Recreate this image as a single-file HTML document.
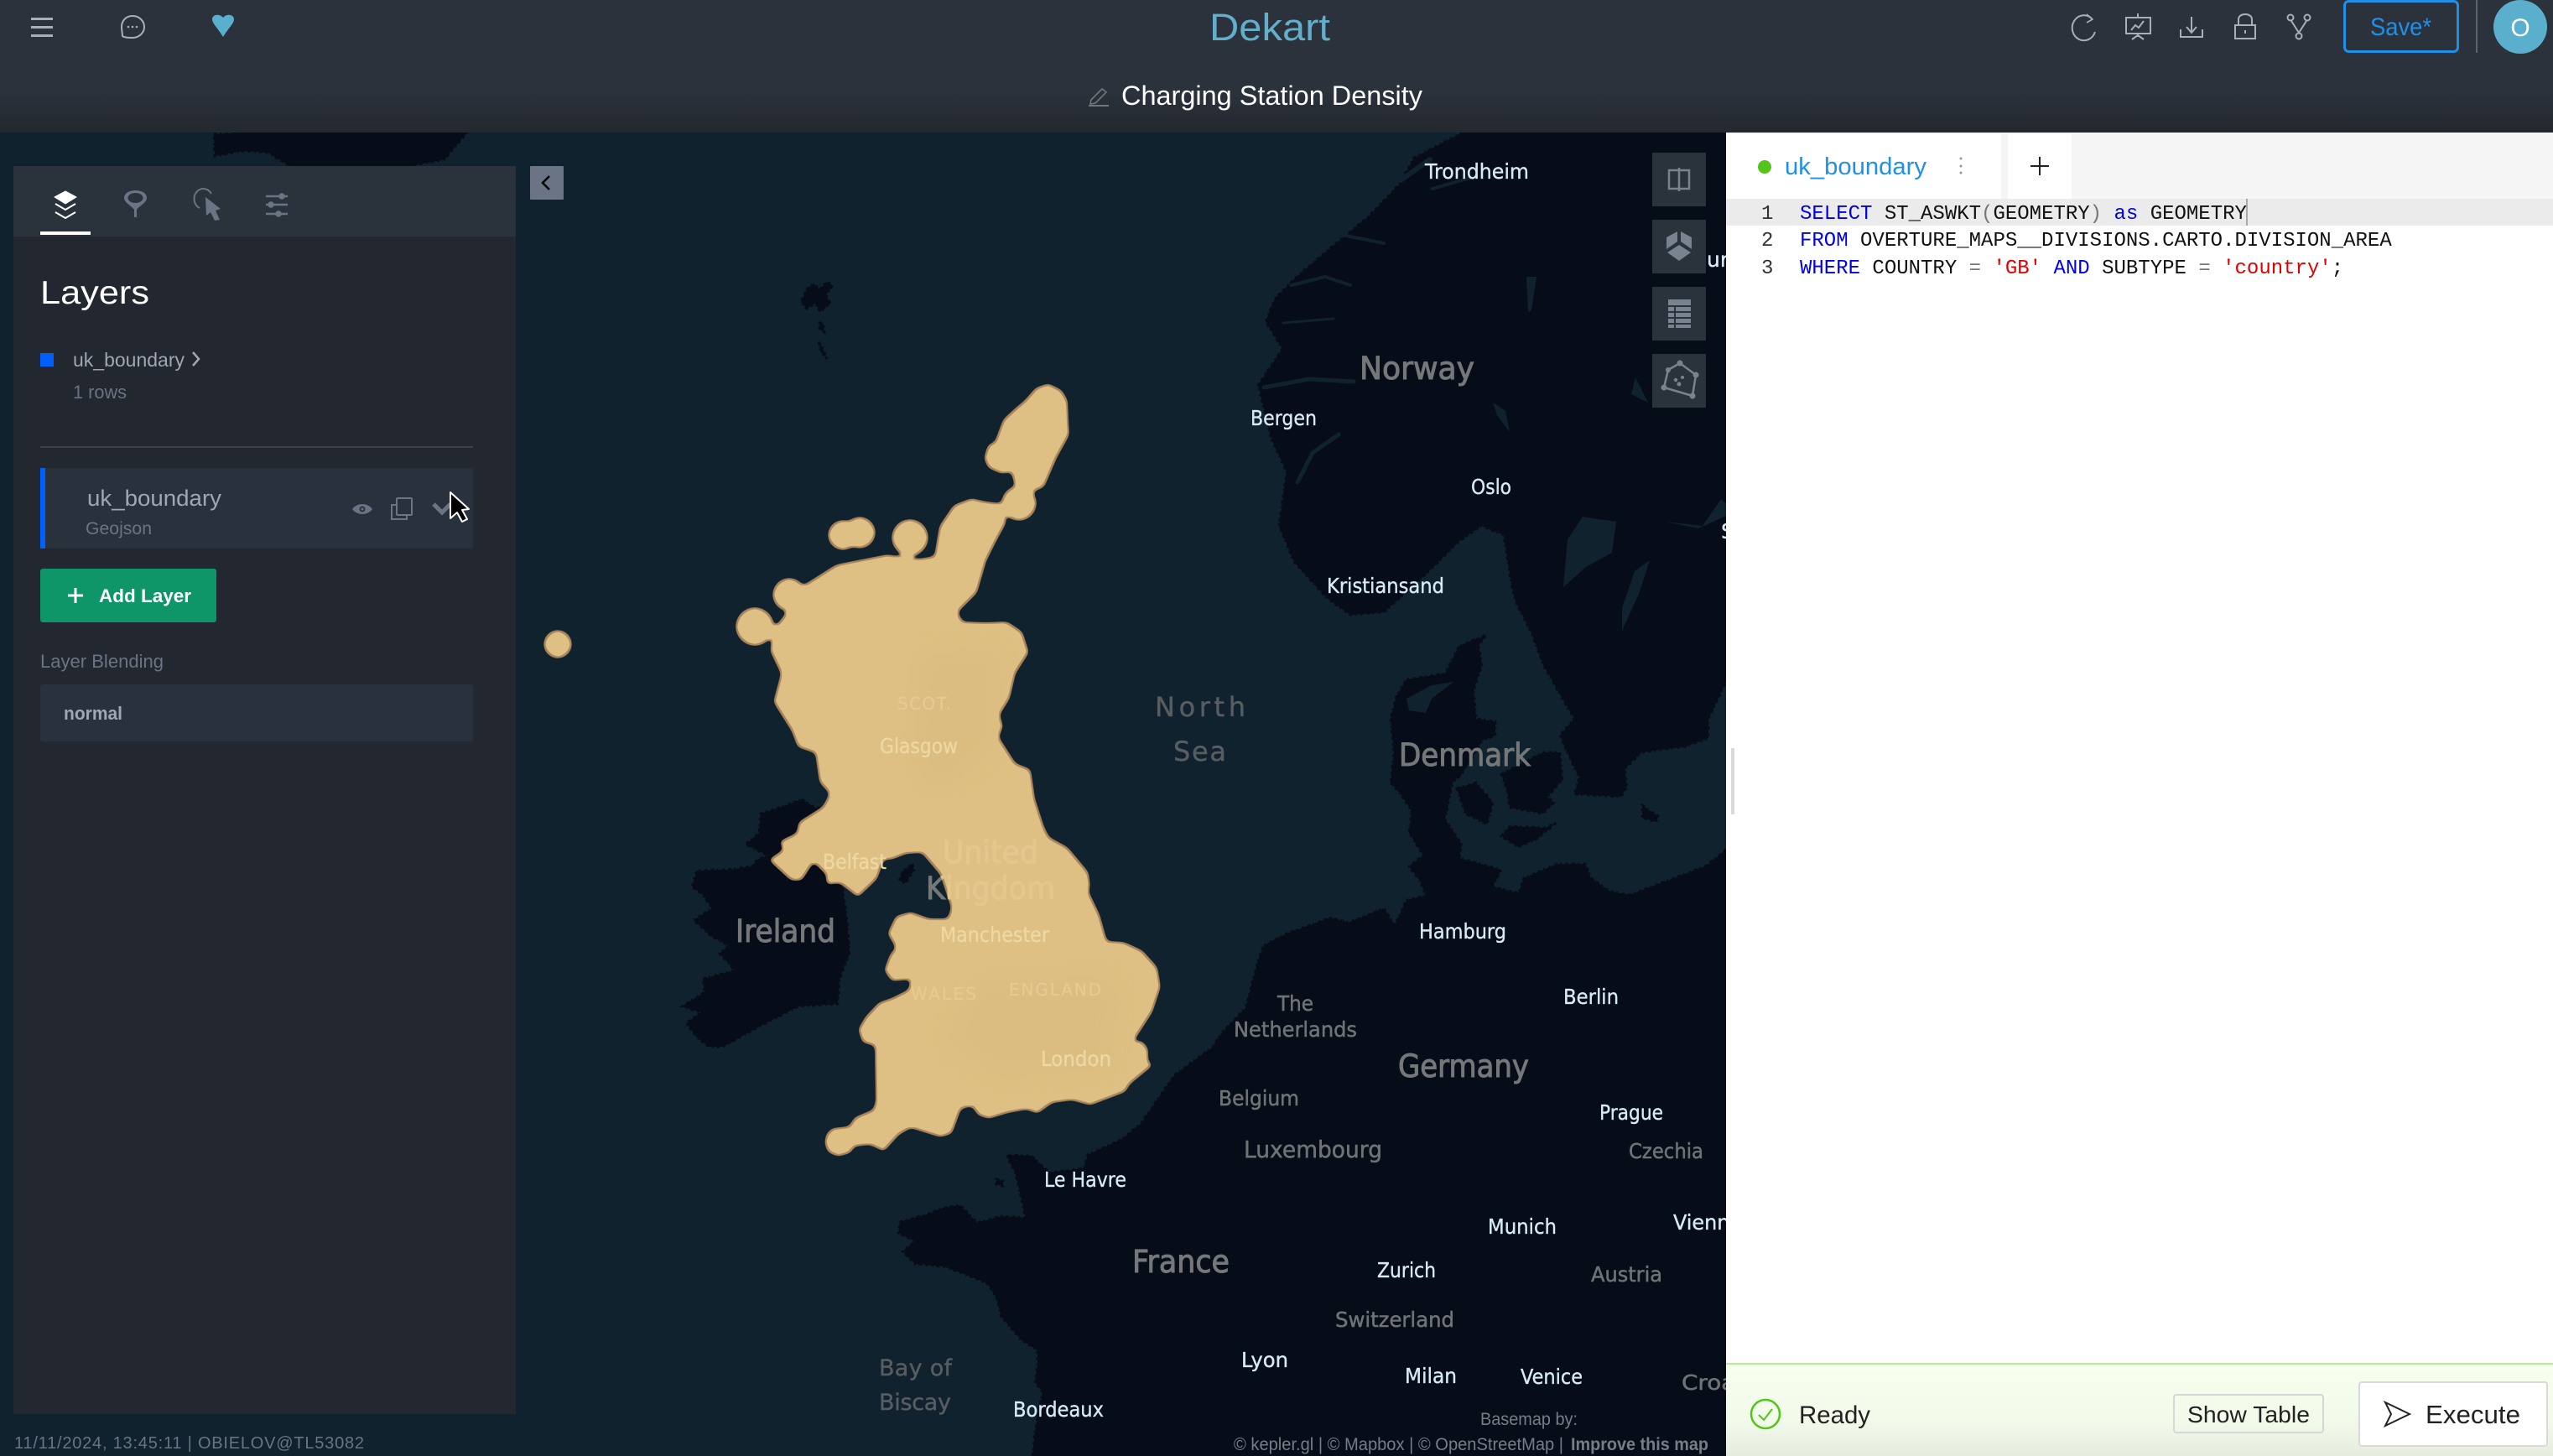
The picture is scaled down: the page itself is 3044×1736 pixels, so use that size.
<!DOCTYPE html>
<html lang="en">
<head>
<meta charset="utf-8">
<title>Dekart - Charging Station Density</title>
<style>
html,body{margin:0;padding:0;background:#10222e;width:3044px;height:1736px;overflow:hidden}
svg{display:block;position:absolute;left:0;top:0}
text{font-family:"Liberation Sans",sans-serif;white-space:pre}
.c{font-family:"DejaVu Sans","Liberation Sans",sans-serif;font-size:25px;fill:#d8ebf4;stroke:#d8ebf4;stroke-width:.35}
.k{font-family:"DejaVu Sans","Liberation Sans",sans-serif;font-size:25px;fill:#707375;stroke:#707375;stroke-width:.5}
.b{font-family:"DejaVu Sans","Liberation Sans",sans-serif;font-size:37px;fill:#757779;stroke:#757779;stroke-width:1}
.s{font-family:"DejaVu Sans","Liberation Sans",sans-serif;font-size:32px;fill:#575d61;stroke:#575d61;stroke-width:.4}
.u{font-family:"DejaVu Sans","Liberation Sans",sans-serif;font-size:25px;fill:#edd8a3;stroke:#edd8a3;stroke-width:.3}
.v{font-family:"DejaVu Sans","Liberation Sans",sans-serif;fill:#e5ca91;stroke:#e5ca91;stroke-width:.3}
.m{font-family:"Liberation Mono",monospace;font-size:24px;fill:#111}
.kw{fill:#0000e6}.st{fill:#e00000}.op{fill:#777}
</style>
</head>
<body>
<svg width="3044" height="1736" viewBox="0 0 3044 1736" xmlns="http://www.w3.org/2000/svg">
<defs>
<linearGradient id="hg" x1="0" y1="0" x2="0" y2="1">
<stop offset="0" stop-color="#2b323c"/><stop offset=".68" stop-color="#2b323c"/><stop offset="1" stop-color="#24282f"/>
</linearGradient>
<linearGradient id="fg" x1="0" y1="0" x2="0" y2="1">
<stop offset="0" stop-color="#f6ffed"/><stop offset=".6" stop-color="#f2faea"/><stop offset="1" stop-color="#e6eddf"/>
</linearGradient>
<clipPath id="mapclip"><rect x="0" y="158" width="2058" height="1578"/></clipPath>
<clipPath id="ukc"><use href="#ukp"/></clipPath>
<filter id="sm" filterUnits="userSpaceOnUse" x="600" y="420" width="850" height="1000" color-interpolation-filters="sRGB">
<feGaussianBlur in="SourceAlpha" stdDeviation="3.5" result="b"/>
<feComponentTransfer in="b" result="s"><feFuncA type="linear" slope="10" intercept="-4.5"/></feComponentTransfer>
<feMorphology in="s" operator="erode" radius="2.2" result="e"/>
<feFlood flood-color="#a8845c" result="o"/>
<feComposite in="o" in2="s" operator="in" result="oo"/>
<feFlood flood-color="#dfc084" result="f"/>
<feComposite in="f" in2="e" operator="in" result="ff"/>
<feMerge><feMergeNode in="oo"/><feMergeNode in="ff"/></feMerge>
</filter>
<filter id="bl" x="-20%" y="-20%" width="140%" height="140%"><feGaussianBlur stdDeviation="14"/></filter>
</defs>

<!-- MAP -->
<g clip-path="url(#mapclip)">
<rect x="0" y="158" width="2058" height="1578" fill="#10222e"/>
<g fill="#060d18" stroke="#060d18" stroke-width="3" stroke-dasharray="4 3 2 5 3 4">
<!-- Iceland tip -->
<polygon points="255,160 290,158 557,158 530,190 490,198 345,198 320,182 290,180 256,186"/>
<!-- Faroe -->
<polygon points="962,345 970,338 978,345 985,336 993,340 985,352 990,362 978,372 972,362 962,368 955,360"/>
<polygon points="977,384 982,387 983,396 977,392"/>
<polygon points="976,408 981,415 986,428 979,420"/>
<!-- Ireland -->
<polygon points="956,953 972,963 979,963 982,1000 1005,1060 1010,1097 1013,1137 1001,1167 999,1197 952,1200 907,1223 862,1248 845,1248 831,1237 818,1220 836,1207 813,1200 840,1183 838,1167 876,1157 858,1137 869,1127 849,1117 827,1097 849,1083 838,1067 825,1057 831,1038 867,1037 896,1033 903,1025 916,1020 889,1007 905,993 907,970 938,960"/>
<polygon points="1088,1030 1090,1038 1079,1053 1072,1050 1077,1038"/>
<!-- Continent -->
<polygon points="1231,1736 1234,1707 1243,1660 1234,1647 1237,1630 1237,1610 1217,1597 1194,1570 1188,1547 1177,1530 1160,1523 1125,1510 1091,1507 1076,1492 1091,1480 1071,1470 1073,1457 1108,1447 1125,1440 1145,1437 1165,1458 1194,1450 1223,1452 1217,1427 1211,1400 1200,1377 1230,1378 1251,1398 1292,1393 1297,1377 1338,1358 1360,1340 1400,1282 1445,1249 1458,1230 1485,1202 1500,1145 1507,1127 1534,1113 1587,1094 1608,1100 1650,1083 1663,1103 1677,1073 1700,1068 1693,1050 1680,1033 1697,1020 1680,993 1683,967 1670,947 1658,933 1662,897 1658,857 1665,830 1677,810 1723,803 1740,770 1772,757 1763,770 1767,793 1757,823 1760,857 1783,860 1783,877 1767,883 1743,923 1732,933 1723,977 1743,1007 1740,1023 1790,1037 1780,1057 1810,1065 1817,1047 1857,1030 1890,1030 1897,1047 1920,1063 1943,1067 2033,1033 2058,1013 2058,1736"/>
<!-- Danish islands -->
<polygon points="1737,940 1760,933 1780,957 1773,983 1747,970"/>
<polygon points="1790,923 1840,897 1860,897 1863,930 1845,950 1853,957 1840,970 1800,963 1797,943"/>
<polygon points="1790,997 1800,985 1843,987 1857,980 1833,1000 1810,1010"/>
<polygon points="1958,960 1977,973 1975,980 1958,975"/>
<!-- Norway + Sweden -->
<polygon points="1744,158 1686,188 1668,220 1632,258 1605,280 1547,329 1520,356 1509,383 1529,416 1500,459 1516,524 1534,562 1525,627 1543,670 1583,714 1610,733 1650,730 1704,681 1739,646 1766,627 1793,638 1802,697 1807,717 1827,757 1840,793 1863,833 1877,857 1860,877 1870,900 1883,927 1877,947 1933,950 1940,937 1937,917 1957,897 2010,890 2037,880 2037,857 2058,813 2058,158"/>
<!-- France small isles -->
<polygon points="1188,1406 1196,1408 1196,1414 1188,1412"/>
</g>
<!-- lakes and fjords -->
<g fill="#10222e">
<polygon points="1887,616 1927,622 1922,659 1891,676 1864,700 1869,643"/>
<polygon points="1967,668 1954,708 1934,752 1934,725 1949,681"/>
<polygon points="1985,622 2030,627 2052,595 2058,600 2058,615 2025,630"/>
<polygon points="1677,833 1707,817 1733,813 1707,833 1700,850 1680,847"/>
<polygon points="1820,330 1832,330 1826,370 1822,372"/>
<polygon points="1780,480 1795,490 1800,515 1785,495"/>
<polygon points="1950,450 1960,470 1965,480 1945,470"/>
</g>
<g fill="none" stroke="#10222e" stroke-linecap="round">
<path d="M1507 462 L1560 452 L1614 455" stroke-width="5"/>
<path d="M1547 575 L1565 540 L1596 518" stroke-width="5"/>
<path d="M1540 340 L1580 330 L1610 340" stroke-width="4"/>
<path d="M1530 385 L1590 380" stroke-width="3"/>
<path d="M1600 280 L1650 290" stroke-width="4"/>
<path d="M1670 215 L1705 190" stroke-width="6"/>
<path d="M1708 225 L1760 210" stroke-width="4"/>
</g>

<!-- labels beneath the layer -->
<text class="b" x="877" y="1123" textLength="119" lengthAdjust="spacingAndGlyphs">Ireland</text>
<text class="b" x="1104" y="1072" textLength="154" lengthAdjust="spacingAndGlyphs">Kingdom</text>

<!-- UK layer -->
<g fill="#000" filter="url(#sm)">
<circle cx="665" cy="768" r="17"/>
<circle cx="900" cy="747" r="23"/>
<circle cx="1005" cy="638" r="18"/>
<circle cx="1025" cy="635" r="19"/>
<circle cx="1085" cy="641" r="22"/>
<circle cx="941" cy="709" r="20"/>
<circle cx="1215" cy="600" r="21"/>
<polygon points="1250,457 1266,465 1273,477 1274,500 1275,519 1260,546 1245,581 1227,588 1209,577 1206,563 1194,565 1178,558 1173,546 1178,530 1186,527 1196,500 1209,488 1222,477 1235,462"/>
<polygon id="ukp" points="1194,600 1200,623 1188,645 1176,669 1165,707 1142,730 1148,741 1175,742 1201,741 1219,753 1227,778 1211,803 1204,833 1192,852 1196,866 1191,879 1211,910 1229,917 1234,952 1245,986 1251,998 1273,1010 1298,1040 1300,1057 1298,1063 1311,1090 1320,1122 1340,1123 1362,1133 1380,1153 1384,1177 1374,1207 1354,1238 1347,1242 1362,1241 1369,1250 1369,1265 1375,1270 1347,1293 1342,1302 1313,1313 1300,1318 1278,1312 1255,1315 1237,1328 1224,1323 1202,1327 1179,1334 1166,1330 1159,1319 1146,1322 1135,1352 1121,1356 1086,1345 1072,1353 1054,1373 1037,1365 1019,1367 1014,1375 999,1379 987,1374 983,1363 985,1352 992,1345 1012,1343 1019,1332 1041,1323 1044,1313 1043,1247 1028,1243 1023,1227 1032,1212 1048,1195 1063,1190 1083,1180 1086,1168 1063,1170 1054,1157 1061,1138 1068,1130 1058,1113 1068,1092 1086,1087 1108,1095 1130,1095 1134,1082 1121,1043 1099,1017 1081,1018 1063,1025 1054,1025 1046,1048 1023,1070 1001,1053 985,1055 985,1043 970,1028 956,1050 943,1050 916,1025 934,1013 929,1003 950,993 952,980 979,963 982,960 989,946 977,933 972,898 951,891 944,872 922,837 931,803 918,776 923,749 941,726 959,697 997,673 1058,661 1092,667 1114,663 1120,627 1137,602 1158,594 1176,598"/>
</g>
<!-- subtle tonal variation -->
<g clip-path="url(#ukc)">
<g fill="#d6b77b" opacity=".35" filter="url(#bl)">
<polygon points="1100,780 1190,780 1190,880 1110,950 1090,900"/>
<polygon points="1170,1170 1330,1170 1320,1270 1190,1280 1130,1240"/>
</g>
</g>

<!-- tinted labels -->
<g clip-path="url(#ukc)">
<text class="b" x="1104" y="1072" textLength="154" lengthAdjust="spacingAndGlyphs" style="fill:#e3c78d;stroke:#e3c78d">Kingdom</text>
</g>
<text class="b" x="1124" y="1029" textLength="114" lengthAdjust="spacingAndGlyphs" style="fill:#e3c78d;stroke:#e3c78d">United</text>
<text class="u" x="1049" y="898" textLength="93" lengthAdjust="spacingAndGlyphs">Glasgow</text>
<text class="u" x="981" y="1036" textLength="76" lengthAdjust="spacingAndGlyphs">Belfast</text>
<text class="u" x="1121" y="1123" textLength="130" lengthAdjust="spacingAndGlyphs">Manchester</text>
<text class="u" x="1241" y="1271" textLength="84" lengthAdjust="spacingAndGlyphs">London</text>
<text class="v" font-size="20" x="1070" y="846" textLength="64" lengthAdjust="spacing">SCOT.</text>
<text class="v" font-size="20" x="1086" y="1192" textLength="78" lengthAdjust="spacing">WALES</text>
<text class="v" font-size="20" x="1203" y="1187" textLength="110" lengthAdjust="spacing">ENGLAND</text>

<!-- countries -->
<text class="b" x="1621" y="452" textLength="137" lengthAdjust="spacingAndGlyphs">Norway</text>
<text class="b" x="1668" y="913" textLength="157" lengthAdjust="spacingAndGlyphs">Denmark</text>
<text class="b" x="1667" y="1284" textLength="156" lengthAdjust="spacingAndGlyphs">Germany</text>
<text class="b" x="1350" y="1517" textLength="116" lengthAdjust="spacingAndGlyphs">France</text>
<text class="k" x="1523" y="1205" textLength="43" lengthAdjust="spacingAndGlyphs">The</text>
<text class="k" x="1471" y="1236" textLength="147" lengthAdjust="spacingAndGlyphs">Netherlands</text>
<text class="k" x="1453" y="1318" textLength="96" lengthAdjust="spacingAndGlyphs">Belgium</text>
<text class="k" x="1483" y="1380" textLength="165" lengthAdjust="spacingAndGlyphs" style="font-size:28px">Luxembourg</text>
<text class="k" x="1942" y="1381" textLength="89" lengthAdjust="spacingAndGlyphs">Czechia</text>
<text class="k" x="1897" y="1528" textLength="85" lengthAdjust="spacingAndGlyphs">Austria</text>
<text class="k" x="1592" y="1582" textLength="142" lengthAdjust="spacingAndGlyphs">Switzerland</text>
<text class="k" x="2005" y="1657" textLength="100" lengthAdjust="spacingAndGlyphs">Croatia</text>
<!-- seas -->
<text class="s" x="1377" y="854" textLength="108" lengthAdjust="spacing">North</text>
<text class="s" x="1399" y="907" textLength="63" lengthAdjust="spacing">Sea</text>
<text class="s" style="font-size:27px" x="1048" y="1640" textLength="87" lengthAdjust="spacing">Bay of</text>
<text class="s" style="font-size:27px" x="1048" y="1681" textLength="86" lengthAdjust="spacing">Biscay</text>
<!-- cities -->
<text class="c" x="1699" y="213" textLength="124" lengthAdjust="spacingAndGlyphs">Trondheim</text>
<text class="c" x="1491" y="507" textLength="79" lengthAdjust="spacingAndGlyphs">Bergen</text>
<text class="c" x="1754" y="589" textLength="48" lengthAdjust="spacingAndGlyphs">Oslo</text>
<text class="c" x="1582" y="707" textLength="140" lengthAdjust="spacingAndGlyphs">Kristiansand</text>
<text class="c" x="1692" y="1119" textLength="104" lengthAdjust="spacingAndGlyphs">Hamburg</text>
<text class="c" x="1864" y="1197" textLength="66" lengthAdjust="spacingAndGlyphs">Berlin</text>
<text class="c" x="1907" y="1335" textLength="76" lengthAdjust="spacingAndGlyphs">Prague</text>
<text class="c" x="1774" y="1471" textLength="82" lengthAdjust="spacingAndGlyphs">Munich</text>
<text class="c" x="1995" y="1466" textLength="82" lengthAdjust="spacingAndGlyphs">Vienna</text>
<text class="c" x="1642" y="1523" textLength="70" lengthAdjust="spacingAndGlyphs">Zurich</text>
<text class="c" x="1480" y="1630" textLength="56" lengthAdjust="spacingAndGlyphs">Lyon</text>
<text class="c" x="1675" y="1649" textLength="62" lengthAdjust="spacingAndGlyphs">Milan</text>
<text class="c" x="1813" y="1650" textLength="74" lengthAdjust="spacingAndGlyphs">Venice</text>
<text class="c" x="1208" y="1689" textLength="108" lengthAdjust="spacingAndGlyphs">Bordeaux</text>
<text class="c" x="1245" y="1415" textLength="98" lengthAdjust="spacingAndGlyphs">Le Havre</text>
<text class="c" x="2035" y="318">ur</text>
<text class="c" x="2052" y="642">S</text>
<!-- attribution -->
<text x="1765" y="1699" font-size="21" fill="#767d86" textLength="116" lengthAdjust="spacingAndGlyphs">Basemap by:</text>
<text x="1471" y="1729" font-size="21" fill="#767d86" textLength="393" lengthAdjust="spacingAndGlyphs">© kepler.gl | © Mapbox | © OpenStreetMap |</text>
<text x="1873" y="1729" font-size="21" font-weight="700" fill="#767d86" textLength="164" lengthAdjust="spacingAndGlyphs">Improve this map</text>
<!-- status -->
<text x="17" y="1727" font-size="20" fill="#6a7485" textLength="417" lengthAdjust="spacing">11/11/2024, 13:45:11 | OBIELOV@TL53082</text>
</g>

<!-- HEADER -->
<rect x="0" y="0" width="3044" height="158" fill="url(#hg)"/>
<g fill="#a9afb7">
<rect x="37" y="21" width="26" height="3"/><rect x="37" y="31" width="26" height="3"/><rect x="37" y="41" width="26" height="3"/>
</g>
<path d="M158 19 C166 19 172 25 172 32 C172 39 166 45 158 45 C154 45 148 45 146 43 C146 40 145 36 145 32 C145 25 150 19 158 19 Z" fill="none" stroke="#a9afb7" stroke-width="2"/>
<circle cx="153" cy="32" r="1.3" fill="#a9afb7"/><circle cx="158" cy="32" r="1.3" fill="#a9afb7"/><circle cx="163" cy="32" r="1.3" fill="#a9afb7"/>
<path d="M266 44 C260 34 253 28 253 23 C253 17 262 16 266 21 C270 16 279 17 279 23 C279 28 272 34 266 44 Z" fill="#5ab0cc"/>

<text x="1442" y="48" font-size="45" fill="#62aecb" textLength="144" lengthAdjust="spacingAndGlyphs">Dekart</text>
<path d="M1301 119 L1314 106 L1319 110 L1306 123 L1300 124 Z" fill="none" stroke="#71767c" stroke-width="1.6"/>
<rect x="1298" y="125" width="24" height="2" fill="#71767c"/>
<text x="1337" y="125" font-size="32" fill="#fff" textLength="359" lengthAdjust="spacingAndGlyphs">Charging Station Density</text>

<g fill="none" stroke="#a9afb7" stroke-width="2">
<!-- reload -->
<path d="M2494 22 A14 15 0 1 0 2498 38"/>
<path d="M2488 17 L2495 23 L2488 27" stroke-width="1.6"/>
<!-- presentation -->
<rect x="2535" y="21" width="29" height="19"/>
<path d="M2549 16 V21 M2549 40 V44 M2549 42 L2542 47 M2549 42 L2556 47 M2541 36 L2546 30 L2550 33 L2556 25"/>
<!-- download -->
<path d="M2613 20 V38 M2607 32 L2613 39 L2619 32 M2600 35 V44 H2626 V35"/>
<!-- lock -->
<rect x="2665" y="30" width="24" height="16"/>
<path d="M2669 30 V23 C2669 15 2685 15 2685 23 V30 M2677 36 V40"/>
<!-- fork -->
<circle cx="2731" cy="21" r="3.5"/><circle cx="2751" cy="21" r="3.5"/><circle cx="2741" cy="43" r="3.5"/>
<path d="M2732 25 L2741 39 M2750 25 L2741 39"/>
</g>
<rect x="2795.5" y="1.5" width="135" height="60" rx="5" fill="none" stroke="#1f8fe8" stroke-width="3"/>
<text x="2826" y="42" font-size="30" fill="#1f8fe8" textLength="73" lengthAdjust="spacingAndGlyphs">Save*</text>
<rect x="2952" y="0" width="2" height="63" fill="#5b636c"/>
<circle cx="3005" cy="32" r="32" fill="#5ab0cc"/>
<text x="3005" y="43" font-size="30" fill="#fff" text-anchor="middle">O</text>

<!-- LEFT PANEL -->
<rect x="16" y="198" width="599" height="1488" fill="#23272f"/>
<rect x="16" y="198" width="599" height="84" fill="#2a323c"/>
<!-- layers tab icon -->
<path d="M78 228 L91 235 L78 243 L65 235 Z" fill="#fff" stroke="#fff" stroke-width="1" stroke-linejoin="round"/>
<path d="M66 243 L78 250 L90 243 M66 253 L78 260 L90 253" fill="none" stroke="#fff" stroke-width="2" stroke-linejoin="round"/>
<rect x="48" y="276" width="60" height="4" fill="#fff"/>
<!-- filter -->
<path d="M148 236 C148 224 175 224 175 236 C175 242 165 246 163 250 V259 H160 V250 C158 246 148 242 148 236 Z" fill="#6a7485"/>
<ellipse cx="161.5" cy="236" rx="9" ry="6" fill="#2a323c"/>
<!-- interaction -->
<path d="M252 231 A11 12 0 1 0 238 248" fill="none" stroke="#6a7485" stroke-width="2"/>
<path d="M245 235 L263 249 L257 251 L262 262 L256 263 L251 253 L246 257 Z" fill="#6a7485"/>
<!-- settings -->
<g stroke="#6a7485" stroke-width="2.5" fill="#6a7485">
<path d="M317 234 H343 M317 244 H343 M317 255 H343" fill="none"/>
<circle cx="336" cy="234" r="2.5"/><circle cx="323" cy="244" r="2.5"/><circle cx="332" cy="255" r="2.5"/>
</g>
<!-- collapse -->
<rect x="632" y="198" width="40" height="40" rx="1" fill="#6a7485"/>
<path d="M655 210 L647 218 L655 226" fill="none" stroke="#000" stroke-width="2.5"/>

<text x="48" y="362" font-size="39" fill="#fff" textLength="130" lengthAdjust="spacingAndGlyphs">Layers</text>
<rect x="48" y="421" width="16" height="16" fill="#0060ff"/>
<text x="87" y="437" font-size="23" fill="#a0a7b4" textLength="133" lengthAdjust="spacingAndGlyphs">uk_boundary</text>
<path d="M230 420 L237 428 L230 436" fill="none" stroke="#a0a7b4" stroke-width="2.5"/>
<text x="87" y="475" font-size="22" fill="#6a7485" textLength="64" lengthAdjust="spacingAndGlyphs">1 rows</text>
<rect x="48" y="532" width="516" height="2" fill="#3a414c"/>

<rect x="48" y="558" width="516" height="96" fill="#29323c"/>
<rect x="48" y="558" width="6" height="96" fill="#0060ff"/>
<text x="104" y="603" font-size="27" fill="#a0a7b4" textLength="160" lengthAdjust="spacingAndGlyphs">uk_boundary</text>
<text x="102" y="637" font-size="21" fill="#6a7485" textLength="79" lengthAdjust="spacingAndGlyphs">Geojson</text>
<!-- eye -->
<path d="M420 607 C426 599 438 599 444 607 C438 615 426 615 420 607 Z" fill="#6a7485"/>
<circle cx="432" cy="607" r="3.5" fill="#29323c"/><circle cx="432" cy="607" r="1.5" fill="#6a7485"/>
<!-- copy -->
<rect x="473" y="594" width="18" height="20" rx="1" fill="none" stroke="#6a7485" stroke-width="2"/>
<path d="M473 602 H467 V619 H485 V614" fill="none" stroke="#6a7485" stroke-width="2"/>
<!-- chevron -->
<path d="M517 601 L527 611 L537 601" fill="none" stroke="#6a7485" stroke-width="5"/>
<!-- cursor -->
<path d="M537 587 L537 618 L545 611 L551 622 L557 619 L551 608 L559 607 Z" fill="#000" stroke="#fff" stroke-width="2" stroke-linejoin="round"/>

<rect x="48" y="678" width="210" height="64" rx="3" fill="#0e9668"/>
<path d="M81 710 H99 M90 701 V719" stroke="#fff" stroke-width="3" fill="none"/>
<text x="118" y="718" font-size="22" font-weight="700" fill="#fff" textLength="110" lengthAdjust="spacingAndGlyphs">Add Layer</text>
<text x="48" y="796" font-size="22" fill="#6a7485" textLength="147" lengthAdjust="spacingAndGlyphs">Layer Blending</text>
<rect x="48" y="816" width="516" height="68" rx="3" fill="#29323c"/>
<text x="76" y="858" font-size="22" font-weight="700" fill="#a0a7b4" textLength="70" lengthAdjust="spacingAndGlyphs">normal</text>

<!-- MAP CONTROLS -->
<g fill="#2a323c">
<rect x="1970" y="182" width="64" height="64"/>
<rect x="1970" y="262" width="64" height="64"/>
<rect x="1970" y="342" width="64" height="64"/>
<rect x="1970" y="422" width="64" height="64"/>
</g>
<g fill="none" stroke="#78838f" stroke-width="2.5">
<rect x="1990" y="203" width="24" height="22"/>
<path d="M2002 200 V228"/>
</g>
<g fill="#78838f">
<path d="M1987 283 L2000 276 L2000 288 L1987 297 Z"/>
<path d="M2017 283 L2004 276 L2004 288 L2017 297 Z"/>
<path d="M2002 292 L2016 301 L2002 311 L1988 301 Z"/>
<rect x="1989" y="357" width="27" height="34"/>
<circle cx="2003" cy="433" r="3.5"/><circle cx="2022" cy="447" r="3.5"/><circle cx="2018" cy="472" r="3.5"/><circle cx="1984" cy="462" r="3.5"/><circle cx="1989" cy="441" r="3"/>
<circle cx="1998" cy="453" r="2.2"/><circle cx="2006" cy="450" r="2"/><circle cx="2002" cy="458" r="2.5"/>
</g>
<path d="M1989 365 H2016 M1989 372 H2016 M1989 379 H2016 M1989 386 H2016 M1997 365 V391" stroke="#2a323c" stroke-width="2" fill="none"/>
<path d="M2003 433 L2022 447 L2018 472 L1984 462 L1989 441 Z" fill="none" stroke="#78838f" stroke-width="2.5"/>

<!-- EDITOR -->
<rect x="2058" y="158" width="986" height="1578" fill="#fff"/>
<rect x="2058" y="158" width="986" height="79" fill="#f5f5f5"/>
<rect x="2058" y="160" width="328" height="77" fill="#fff"/>
<rect x="2394" y="160" width="76" height="77" fill="#fff"/>
<circle cx="2104" cy="199" r="8" fill="#52c41a"/>
<text x="2128" y="208" font-size="29" fill="#1f8fe8" textLength="169" lengthAdjust="spacingAndGlyphs">uk_boundary</text>
<g fill="#999"><circle cx="2338" cy="189" r="1.5"/><circle cx="2338" cy="198" r="1.5"/><circle cx="2338" cy="206" r="1.5"/></g>
<path d="M2421 198 H2443 M2432 187 V209" stroke="#222" stroke-width="2" fill="none"/>
<rect x="2058" y="237" width="986" height="32" fill="#ebebeb"/>
<rect x="2678" y="237" width="2" height="32" fill="#aaa"/>
<text class="m" x="2100" y="261" style="fill:#333">1</text>
<text class="m" x="2100" y="293" style="fill:#333">2</text>
<text class="m" x="2100" y="326" style="fill:#333">3</text>
<text class="m" x="2146" y="261" xml:space="preserve"><tspan class="kw">SELECT</tspan> ST_ASWKT<tspan class="op">(</tspan>GEOMETRY<tspan class="op">)</tspan> <tspan class="kw">as</tspan> GEOMETRY</text>
<text class="m" x="2146" y="293" xml:space="preserve"><tspan class="kw">FROM</tspan> OVERTURE_MAPS__DIVISIONS.CARTO.DIVISION_AREA</text>
<text class="m" x="2146" y="326" xml:space="preserve"><tspan class="kw">WHERE</tspan> COUNTRY <tspan class="op">=</tspan> <tspan class="st">'GB'</tspan> <tspan class="kw">AND</tspan> SUBTYPE <tspan class="op">=</tspan> <tspan class="st">'country'</tspan>;</text>
<rect x="2064" y="892" width="4" height="79" rx="1" fill="#d9d9d9"/>

<!-- FOOTER -->
<rect x="2058" y="1627" width="986" height="109" fill="url(#fg)"/>
<rect x="2058" y="1625" width="986" height="2" fill="#b7eb8f"/>
<circle cx="2105" cy="1686" r="17" fill="none" stroke="#52c41a" stroke-width="2.5"/>
<path d="M2097 1687 L2103 1693 L2113 1680" fill="none" stroke="#52c41a" stroke-width="2"/>
<text x="2145" y="1697" font-size="30" fill="#222" textLength="85" lengthAdjust="spacingAndGlyphs">Ready</text>
<rect x="2592" y="1663" width="178" height="45" rx="3" fill="none" stroke="#d6d6d6" stroke-width="2"/>
<text x="2608" y="1696" font-size="28" fill="#222" textLength="146" lengthAdjust="spacingAndGlyphs">Show Table</text>
<rect x="2813" y="1648" width="224" height="76" rx="3" fill="#fff" stroke="#d9d9d9" stroke-width="2"/>
<path d="M2844 1672 L2873 1686 L2844 1700 L2851 1686 Z" fill="none" stroke="#222" stroke-width="2" stroke-linejoin="miter"/>
<text x="2892" y="1697" font-size="31" fill="#222" textLength="113" lengthAdjust="spacingAndGlyphs">Execute</text>
</svg>
</body>
</html>
